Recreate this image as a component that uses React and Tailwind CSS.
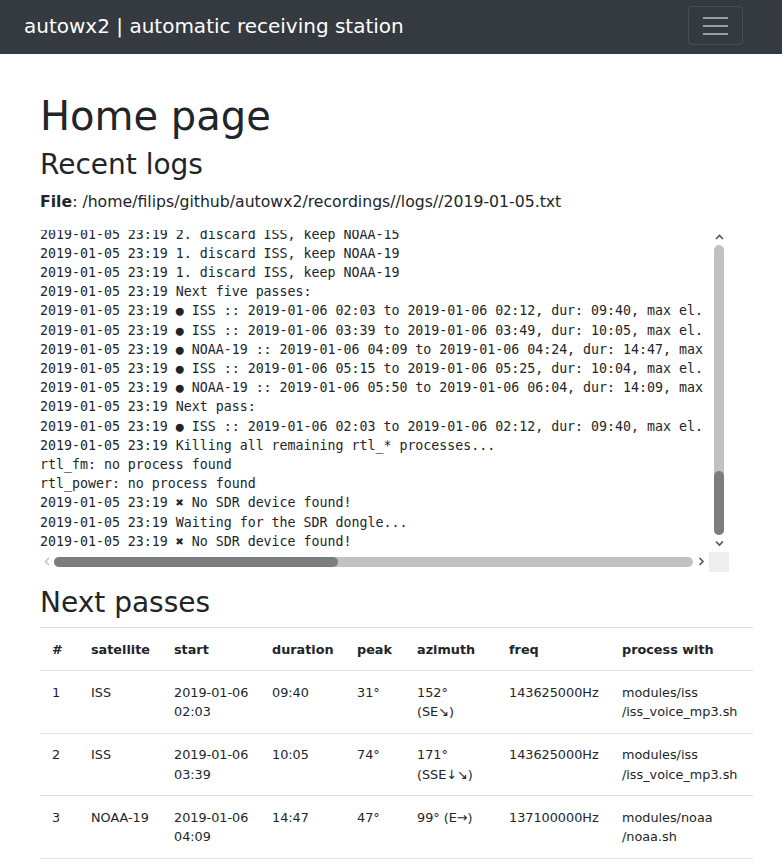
import React from 'react'

const logLines = [
  '2019-01-05 23:19 2. discard ISS, keep NOAA-15',
  '2019-01-05 23:19 1. discard ISS, keep NOAA-19',
  '2019-01-05 23:19 1. discard ISS, keep NOAA-19',
  '2019-01-05 23:19 Next five passes:',
  '2019-01-05 23:19 ● ISS :: 2019-01-06 02:03 to 2019-01-06 02:12, dur: 09:40, max el. 31°',
  '2019-01-05 23:19 ● ISS :: 2019-01-06 03:39 to 2019-01-06 03:49, dur: 10:05, max el. 74°',
  '2019-01-05 23:19 ● NOAA-19 :: 2019-01-06 04:09 to 2019-01-06 04:24, dur: 14:47, max el. 47°',
  '2019-01-05 23:19 ● ISS :: 2019-01-06 05:15 to 2019-01-06 05:25, dur: 10:04, max el. 22°',
  '2019-01-05 23:19 ● NOAA-19 :: 2019-01-06 05:50 to 2019-01-06 06:04, dur: 14:09, max el. 18°',
  '2019-01-05 23:19 Next pass:',
  '2019-01-05 23:19 ● ISS :: 2019-01-06 02:03 to 2019-01-06 02:12, dur: 09:40, max el. 31°',
  '2019-01-05 23:19 Killing all remaining rtl_* processes...',
  'rtl_fm: no process found',
  'rtl_power: no process found',
  '2019-01-05 23:19 ✖ No SDR device found!',
  '2019-01-05 23:19 Waiting for the SDR dongle...',
  '2019-01-05 23:19 ✖ No SDR device found!',
]

const passes = [
  { n: 1, sat: 'ISS', date: '2019-01-06', time: '02:03', dur: '09:40', peak: '31°', az: ['152°', '(SE↘)'], freq: '143625000Hz', proc: ['modules/iss', '/iss_voice_mp3.sh'] },
  { n: 2, sat: 'ISS', date: '2019-01-06', time: '03:39', dur: '10:05', peak: '74°', az: ['171°', '(SSE↓↘)'], freq: '143625000Hz', proc: ['modules/iss', '/iss_voice_mp3.sh'] },
  { n: 3, sat: 'NOAA-19', date: '2019-01-06', time: '04:09', dur: '14:47', peak: '47°', az: ['99° (E→)'], freq: '137100000Hz', proc: ['modules/noaa', '/noaa.sh'] },
]

const cols = [39, 83, 98, 85, 60, 92, 113, 143]
const heads = ['#', 'satellite', 'start', 'duration', 'peak', 'azimuth', 'freq', 'process with']

function Chevron({ dir, light }) {
  const pts = {
    up: '1,5 4.5,1.5 8,5',
    down: '1,1.5 4.5,5 8,1.5',
    left: '5,1 1.5,4.5 5,8',
    right: '1.5,1 5,4.5 1.5,8',
  }[dir]
  const vertical = dir === 'up' || dir === 'down'
  return (
    <svg width={vertical ? 9 : 7} height={vertical ? 7 : 9} viewBox={vertical ? '0 0 9 7' : '0 0 7 9'}>
      <polyline points={pts} fill="none" stroke={light ? '#c4c4c4' : '#505357'} strokeWidth="1.6" />
    </svg>
  )
}

export default function App() {
  return (
    <div className="min-h-screen bg-white text-[#212529] font-['DejaVu_Sans',sans-serif]">
      <nav className="h-[54px] bg-[#343a40] flex justify-between pl-[24px] pr-[39px]">
        <span className="text-[20px] leading-[30px] text-white mt-[11px]">autowx2 | automatic receiving station</span>
        <button className="mt-[6px] w-[55px] h-[39px] border border-white/10 rounded-[4px] flex flex-col items-center justify-center gap-[6px]">
          <span className="block w-[25px] h-[2px] bg-[#9a9da0]" />
          <span className="block w-[25px] h-[2px] bg-[#9a9da0]" />
          <span className="block w-[25px] h-[2px] bg-[#9a9da0]" />
        </button>
      </nav>

      <main className="pl-[40px] pr-[29px] pt-[38px]">
        <h1 className="text-[40px] leading-[48px] mb-[8px]">Home page</h1>
        <h3 className="text-[28px] leading-[33.6px] mb-[8px]">Recent logs</h3>
        <p className="text-[15.7px] leading-[24px] mb-[16px]">
          <b className="font-bold">File</b>: /home/filips/github/autowx2/recordings//logs//2019-01-05.txt
        </p>

        <div className="w-[689px] mb-[14px]">
          <div className="flex h-[322px]">
            <div className="w-[669px] overflow-hidden">
              <pre className="mt-[-5px] font-['DejaVu_Sans_Mono',monospace] text-[13.27px] leading-[19.2px] whitespace-pre text-[#212529]">
                {logLines.join('\n')}
              </pre>
            </div>
            <div className="w-[20px] flex flex-col items-center">
              <div className="h-[15px] flex items-center justify-center pt-[1px]"><Chevron dir="up" /></div>
              <div className="flex-1 w-[10px] rounded-full bg-[#c1c1c1] flex flex-col justify-end">
                <div className="h-[64px] rounded-full bg-[#7b7d7f]" />
              </div>
              <div className="h-[17px] flex items-center justify-center"><Chevron dir="down" /></div>
            </div>
          </div>
          <div className="flex h-[20px]">
            <div className="w-[669px] flex items-center">
              <div className="w-[14px] flex justify-center"><Chevron dir="left" light /></div>
              <div className="flex-1 h-[10px] rounded-full bg-[#c1c1c1]">
                <div className="w-[284px] h-[10px] rounded-full bg-[#7b7d7f]" />
              </div>
              <div className="w-[16px] flex justify-center"><Chevron dir="right" /></div>
            </div>
            <div className="w-[20px] h-[20px] bg-[#eeeeef]" />
          </div>
        </div>

        <h3 className="text-[28px] leading-[33.6px] mb-[8px]">Next passes</h3>
        <table className="w-[713px] table-fixed border-collapse text-[12.8px] leading-[19.2px]">
          <colgroup>
            {cols.map((w, i) => <col key={i} style={{ width: w }} />)}
          </colgroup>
          <thead>
            <tr className="border-t border-b border-[#dee2e6]">
              {heads.map(h => (
                <th key={h} className="text-left font-bold px-[12px] py-[11.5px] align-top whitespace-nowrap">{h}</th>
              ))}
            </tr>
          </thead>
          <tbody>
            {passes.map(p => (
              <tr key={p.n} className="border-b border-[#dee2e6]">
                <td className="px-[12px] py-[11.5px] align-top">{p.n}</td>
                <td className="px-[12px] py-[11.5px] align-top">{p.sat}</td>
                <td className="px-[12px] py-[11.5px] align-top whitespace-nowrap">{p.date}<br />{p.time}</td>
                <td className="px-[12px] py-[11.5px] align-top">{p.dur}</td>
                <td className="px-[12px] py-[11.5px] align-top">{p.peak}</td>
                <td className="px-[12px] py-[11.5px] align-top whitespace-nowrap">
                  {p.az.map((a, i) => <div key={i}>{a}</div>)}
                </td>
                <td className="px-[12px] py-[11.5px] align-top whitespace-nowrap">{p.freq}</td>
                <td className="px-[12px] py-[11.5px] align-top whitespace-nowrap">
                  {p.proc.map((a, i) => <div key={i}>{a}</div>)}
                </td>
              </tr>
            ))}
          </tbody>
        </table>
      </main>
    </div>
  )
}
